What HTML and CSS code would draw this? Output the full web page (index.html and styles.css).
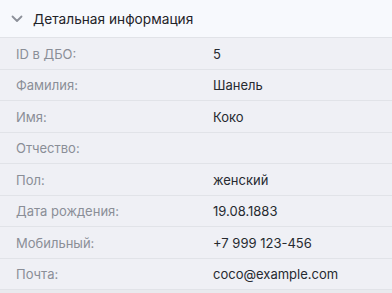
FILE: index.html
```html
<!DOCTYPE html>
<html lang="ru">
<head>
<meta charset="utf-8">
<link rel="stylesheet" href="styles.css">
</head>
<body>
<section class="panel">
  <header class="panel-head">
    <svg class="chev" width="12" height="8" viewBox="0 0 12 8"><path d="M1.5 1.5 L6 6 L10.5 1.5" fill="none" stroke="#8c9099" stroke-width="1.8" stroke-linecap="round" stroke-linejoin="round"/></svg>
    <span class="title">Детальная информация</span>
  </header>
  <dl class="rows">
    <div class="row"><dt>ID в ДБО:</dt><dd>5</dd></div>
    <div class="row"><dt>Фамилия:</dt><dd>Шанель</dd></div>
    <div class="row"><dt>Имя:</dt><dd>Коко</dd></div>
    <div class="row"><dt>Отчество:</dt><dd></dd></div>
    <div class="row"><dt>Пол:</dt><dd>женский</dd></div>
    <div class="row"><dt>Дата рождения:</dt><dd>19.08.1883</dd></div>
    <div class="row"><dt>Мобильный:</dt><dd>+7 999 123-456</dd></div>
    <div class="row"><dt>Почта:</dt><dd>coco@example.com</dd></div>
  </dl>
</section>
</body>
</html>
```
FILE: styles.css
```css
html, body { margin: 0; padding: 0; }
body {
  background: #e9eaee;
  font-family: Inter, "Noto Sans", sans-serif;
  width: 392px;
  height: 293px;
  overflow: hidden;
}
.panel { background: #eff0f5; }
.panel-head {
  height: 38px;
  box-sizing: border-box;
  background: #f7f9fd;
  border-bottom: 1px solid #e1e3e8;
  display: flex;
  align-items: center;
  padding-left: 11px;
}
.chev { margin-right: 10px; }
.title { font-size: 13.7px; color: #1f2329; }
.rows { margin: 0; padding: 0; }
.row {
  display: grid;
  grid-template-columns: 197px 1fr;
  height: 31.5px;
  box-sizing: border-box;
  border-bottom: 1px solid #e1e3e8;
  align-items: center;
  padding-left: 16px;
  padding-top: 1px;
  font-size: 13px;
}
.row dt { color: #8a8e97; }
.row dd { margin: 0; color: #262a30; }
```
